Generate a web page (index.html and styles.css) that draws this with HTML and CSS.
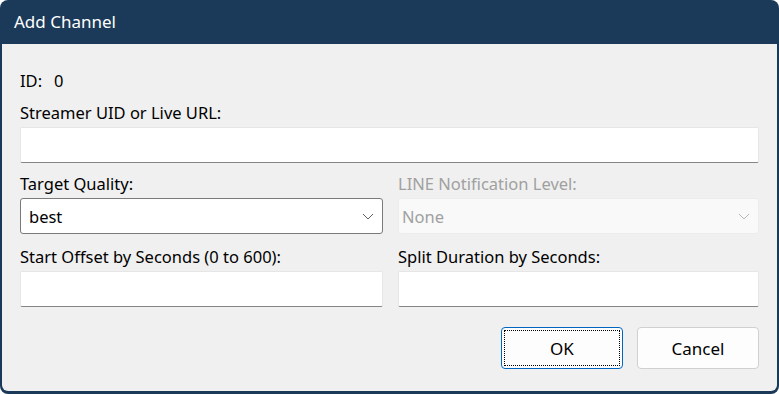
FILE: index.html
```html
<!DOCTYPE html>
<html lang="en">
<head>
  <meta charset="UTF-8">
  <title>Add Channel</title>
  <link rel="stylesheet" href="styles.css">
</head>
<body>
  <div class="window">
    <div class="titlebar">Add Channel</div>
    <div class="content">
      <div class="id-row"><span>ID:</span><span class="id-value">0</span></div>

      <label class="label">Streamer UID or Live URL:</label>
      <div class="textbox"></div>

      <div class="columns">
        <div class="field">
          <label class="label">Target Quality:</label>
          <div class="combo">
            <span>best</span>
            <svg class="chevron" width="12" height="7" viewBox="0 0 12 7"><path d="M1 1 L6 6 L11 1" fill="none" stroke="#5f5f5f" stroke-width="1"/></svg>
          </div>
        </div>
        <div class="field">
          <label class="label disabled">LINE Notification Level:</label>
          <div class="combo combo-disabled">
            <span>None</span>
            <svg class="chevron" width="12" height="7" viewBox="0 0 12 7"><path d="M1 1 L6 6 L11 1" fill="none" stroke="#b8b8b8" stroke-width="1"/></svg>
          </div>
        </div>
        <div class="field">
          <label class="label label-wide">Start Offset by Seconds (0 to 600):</label>
          <div class="textbox"></div>
        </div>
        <div class="field">
          <label class="label label-wide">Split Duration by Seconds:</label>
          <div class="textbox"></div>
        </div>
      </div>

      <div class="buttons">
        <button type="button" class="btn btn-default"><span class="focus">OK</span></button>
        <button type="button" class="btn">Cancel</button>
      </div>
    </div>
  </div>
</body>
</html>
```

FILE: styles.css
```css
html, body {
  margin: 0;
  padding: 0;
  background: #ffffff;
}
body {
  font-family: "Noto Sans", "Open Sans", sans-serif;
  font-size: 16.5px;
  color: #000;
}
.window {
  width: 779px;
  height: 394px;
  box-sizing: border-box;
  background: #1b3a59;
  border-radius: 8px;
  padding: 0 2px 3px 2px;
  display: flex;
  flex-direction: column;
}
.titlebar {
  height: 44px;
  line-height: 44px;
  padding-left: 12px;
  color: #ffffff;
  font-size: 17px;
}
.content {
  flex: 1;
  background: #f0f0f0;
  border-radius: 0 0 6px 6px;
  padding: 26px 18px 0 18px;
}
.id-row {
  height: 22px;
  line-height: 22px;
}
.id-value {
  margin-left: 12px;
}
.label {
  display: block;
  height: 22px;
  line-height: 22px;
  margin-top: 10px;
  margin-bottom: 3px;
}
.label-wide {
  margin-top: 12px;
}
.label.disabled {
  color: #a0a0a0;
}
.textbox {
  height: 36px;
  box-sizing: border-box;
  background: #ffffff;
  border: 1px solid #e6e6e6;
  border-bottom: 1px solid #868686;
  border-radius: 2px;
}
.columns {
  display: grid;
  grid-template-columns: 363px 361px;
  column-gap: 15px;
}
.combo {
  height: 36px;
  box-sizing: border-box;
  background: #ffffff;
  border: 1px solid #7a7a7a;
  border-radius: 3px;
  display: flex;
  align-items: center;
  justify-content: space-between;
  padding: 0 8px 0 8px;
}
.combo-disabled {
  background: #f9f9f9;
  border-color: #ececec;
  color: #a0a0a0;
  padding-left: 3px;
}
.chevron {
  display: block;
}
.buttons {
  display: flex;
  justify-content: flex-end;
  gap: 14px;
  margin-top: 20px;
}
.btn {
  width: 122px;
  height: 42px;
  box-sizing: border-box;
  background: #fdfdfd;
  border: 1px solid #d0d0d0;
  border-radius: 4px;
  font-family: inherit;
  font-size: 17px;
  color: #000;
  padding: 0;
}
.btn-default {
  border: 1px solid #0067c0;
  padding: 2px;
}
.focus {
  display: flex;
  align-items: center;
  justify-content: center;
  height: 100%;
  box-sizing: border-box;
  border: 1px dotted #000;
}
```
